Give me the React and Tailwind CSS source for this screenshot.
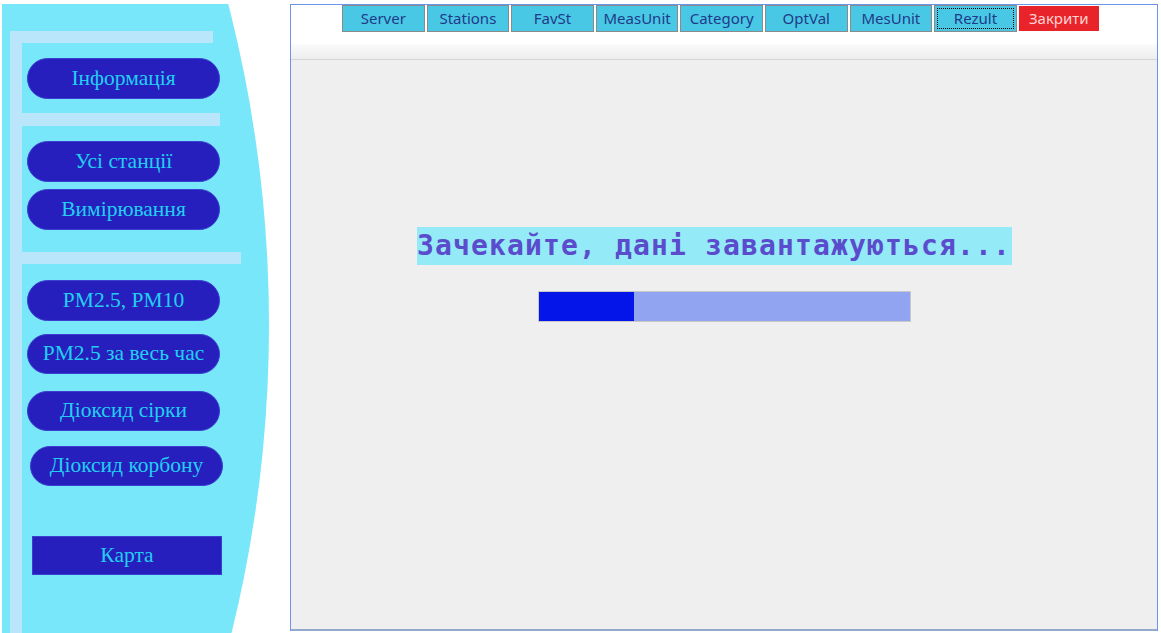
import React from "react";

const pill =
  "flex items-center justify-center rounded-full bg-[#271fbd] border border-[#3b3fd0] text-[#22cff3] text-[21.5px] leading-none [font-family:'Liberation_Serif',serif]";

function Pill({ children, cls }) {
  return <div className={`${pill} ${cls}`}>{children}</div>;
}

const tb =
  "h-[27px] w-[82.6px] flex items-center justify-center bg-[#48c8e4] border border-[#8a8a8a] text-[#1f3a8a] text-[15px] leading-none [font-family:'Noto_Sans',sans-serif]";

export default function App() {
  const tabs = ["Server", "Stations", "FavSt", "MeasUnit", "Category", "OptVal", "MesUnit"];
  return (
    <div className="flex h-[633px] w-[1161px] bg-white overflow-hidden">
      {/* Sidebar */}
      <div className="ml-[2px] mt-[4px] w-[267px] h-[629px] bg-[#78e7f9] [clip-path:circle(1285px_at_-1018px_321px)] flex flex-col pl-[8px] pt-[27px]">
        <div className="h-[12px] w-[203px] bg-[#b9e6fb]" />
        <div className="flex flex-1">
          <div className="w-[12px] bg-[#b9e6fb]" />
          <div className="flex flex-col">
            <Pill cls="mt-[15px] ml-[5px] w-[193px] h-[41px]">Інформація</Pill>
            <div className="mt-[14px] h-[13px] w-[198px] bg-[#b9e6fb]" />
            <Pill cls="mt-[15px] ml-[5px] w-[193px] h-[41px]">Усі станції</Pill>
            <Pill cls="mt-[7px] ml-[5px] w-[193px] h-[41px]">Вимірювання</Pill>
            <div className="mt-[22px] h-[12px] w-[219px] bg-[#b9e6fb]" />
            <Pill cls="mt-[16px] ml-[5px] w-[193px] h-[41px]">PM2.5, PM10</Pill>
            <Pill cls="mt-[13px] ml-[5px] w-[193px] h-[40px]">PM2.5 за весь час</Pill>
            <Pill cls="mt-[17px] ml-[5px] w-[193px] h-[40px]">Діоксид сірки</Pill>
            <Pill cls="mt-[15px] ml-[8px] w-[193px] h-[40px]">Діоксид корбону</Pill>
            <div className="mt-[50px] ml-[10px] w-[190px] h-[39px] flex items-center justify-center bg-[#271fbd] border border-[#3b3fd0] text-[#22cff3] text-[21.5px] leading-none [font-family:'Liberation_Serif',serif]">
              Карта
            </div>
          </div>
        </div>
      </div>

      {/* Right panel */}
      <div className="ml-[21px] mt-[4px] w-[868px] h-[627px] flex flex-col border-t border-x border-[#6a95ea]">
        <div className="h-[39px] bg-white flex items-start pl-[51px] gap-[2px]">
          {tabs.map((t) => (
            <div key={t} className={tb}>{t}</div>
          ))}
          <div className="h-[27px] w-[82.6px] flex items-center justify-center bg-[#48c8e4] border border-[#8a8a8a] p-[2px]">
            <div className="w-full h-full flex items-center justify-center border border-dotted border-black text-[#1f3a8a] text-[15px] leading-none [font-family:'Noto_Sans',sans-serif]">
              Rezult
            </div>
          </div>
          <div className="mt-[1px] h-[25px] w-[80px] flex items-center justify-center bg-[#e8242a] text-[#ffd2d2] text-[15px] leading-none [font-family:'Noto_Sans',sans-serif]">
            Закрити
          </div>
        </div>
        <div className="h-[16px] bg-gradient-to-b from-[#fbfbfb] to-[#ededed] border-b border-[#d6d6d6]" />
        <div className="flex-1 bg-[#efefef] border-b-2 border-[#93a9cc] flex flex-col pt-[167px]">
          <div className="ml-[126px] self-start h-[38px] flex items-center bg-[#94eaf6] text-[#5a4ccc] text-[28px] font-bold tracking-[1.14px] leading-none [font-family:'DejaVu_Sans_Mono',monospace] pr-[1px]">
            Зачекайте, дані завантажуються...
          </div>
          <div className="mt-[26px] ml-[247px] w-[373px] h-[31px] border border-[#c8c8c8] bg-[#90a4f2] flex">
            <div className="h-full bg-[#0415ea]" style={{ width: "95px" }} />
          </div>
        </div>
      </div>
    </div>
  );
}
